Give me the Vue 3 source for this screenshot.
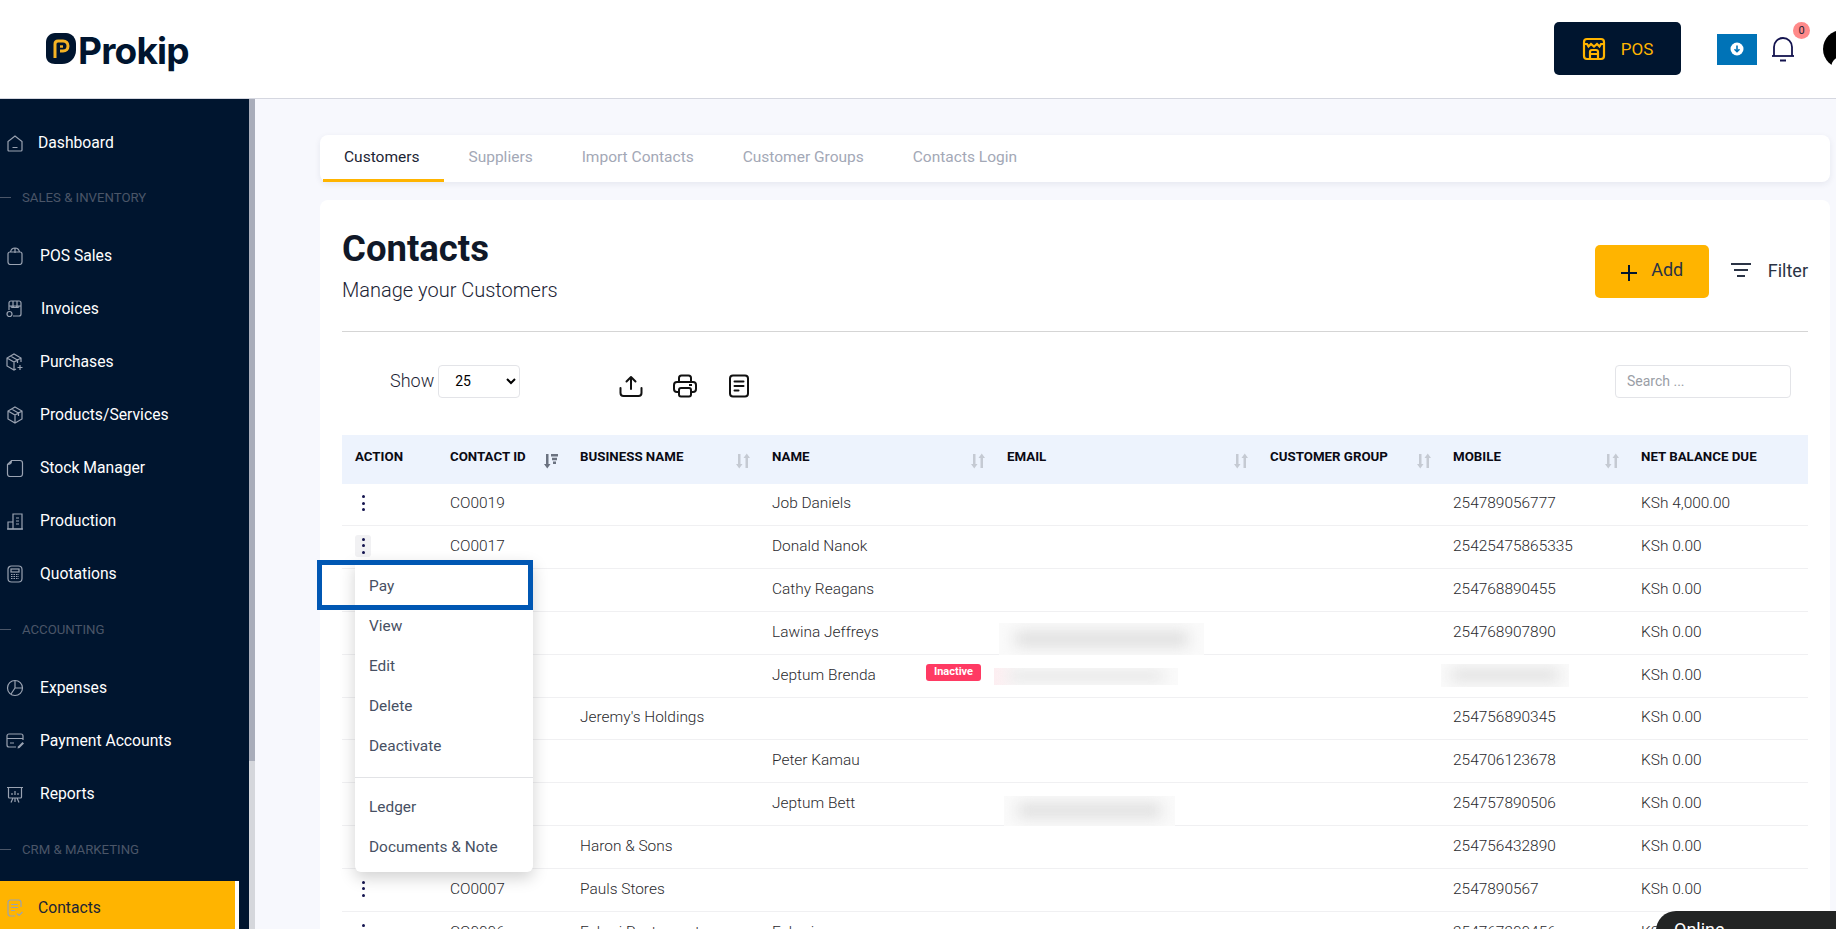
<template>
  <div class="page">
    <header class="topbar">
      <div class="logo">
        <svg class="logo-mark" viewBox="0 0 30 31" width="30" height="31">
          <path d="M9 0h11c6 0 10 5 10 11v6c0 8-6 14-14 14H9c-5 0-9-3-9-8V9c0-5 4-9 9-9z" fill="#00152f" />
          <path d="M9 25V11c0-2 1-3 3-3h5c3 0 5 2 5 5s-2 5-5 5h-3" fill="none" stroke="#f5b324" stroke-width="3" />
          <path d="M14 13.500h3" stroke="#f5b324" stroke-width="2.400" />
        </svg>
        <span class="logo-text">Prokip</span>
      </div>
      <div class="top-actions">
        <button class="pos-btn">
          <svg viewBox="0 0 24 24" width="24" height="24" fill="none" stroke="#ffb400" stroke-width="2.200">
            <rect x="2" y="2" width="20" height="20" rx="3" />
            <path d="M2 7h3l1.500 2.500L9 7l3 2.500L15 7l2.500 2.500L19 7h3" />
            <path d="M8 22v-7c0-1 1-2 2-2h4c1 0 2 1 2 2v7M8 17h8" />
          </svg>
          <span>POS</span>
        </button>
        <div class="download">
          <svg viewBox="0 0 14 14" width="14" height="14">
            <circle cx="7" cy="7" r="6.500" fill="#fff" />
            <path d="M7 3.500v6M4.500 7.200L7 9.700l2.500-2.500" fill="none" stroke="#0073b7" stroke-width="1.600" />
          </svg>
        </div>
        <div class="bell">
          <svg viewBox="0 0 24 28" width="24" height="28" fill="none" stroke="#14144f" stroke-width="1.800">
            <path d="M3 21v-9a9 9 0 0 1 18 0v9" />
            <path d="M1 21h22" />
            <path d="M9 25.500h6" stroke-width="2" />
          </svg>
          <span class="bell-count">0</span>
        </div>
        <div class="avatar">
          <svg viewBox="0 0 38 38" width="38" height="38">
            <circle cx="19" cy="19" r="19" fill="#000" />
            <circle cx="21" cy="14" r="6" fill="#fff" />
            <path d="M8 38c0-8 6-12 13-12s13 4 13 12z" fill="#fff" />
          </svg>
        </div>
      </div>
    </header>

    <div class="body">
      <aside class="sidebar">
        <nav class="nav">
          <template v-for="item in navItems" :key="item.label">
            <div v-if="item.section" class="nav-section">
              <span class="dash"></span>{{ item.label }}
            </div>
            <div v-else class="nav-item" :class="{ active: item.active }" :style="{ gap: (item.gap || 16) + 'px' }">
              <svg class="nav-icon" viewBox="0 0 18 18" width="18" height="18" fill="none" stroke-width="1.200" v-html="item.icon"></svg>
              <span>{{ item.label }}</span>
            </div>
          </template>
        </nav>
        <div class="scrollbar"><div class="thumb"></div></div>
      </aside>

      <main class="content">
        <div class="tabs">
          <div v-for="(tab, i) in tabs" :key="tab" class="tab" :class="{ on: i === 0 }">{{ tab }}</div>
        </div>

        <section class="card">
          <div class="card-head">
            <div>
              <h1>Contacts</h1>
              <p>Manage your Customers</p>
            </div>
            <div class="head-actions">
              <button class="add-btn">
                <svg viewBox="0 0 18 18" width="18" height="18" stroke="#00152f" stroke-width="2">
                  <path d="M9 1v16M1 9h16" />
                </svg>
                <span>Add</span>
              </button>
              <div class="filter">
                <svg viewBox="0 0 22 16" width="22" height="16" stroke="#2a3345" stroke-width="2">
                  <path d="M1 2h20M4 8h14M7 14h8" />
                </svg>
                Filter
              </div>
            </div>
          </div>

          <div class="toolbar">
            <div class="show">
              <label>Show</label>
              <select class="page-size">
                <option>25</option>
              </select>
            </div>
            <div class="tools">
              <svg viewBox="0 0 24 24" width="24" height="24" fill="none" stroke="#111" stroke-width="2" stroke-linecap="round" stroke-linejoin="round">
                <path d="M12 15V3M7.500 7.500L12 3l4.500 4.500" />
                <path d="M1.500 14v5c0 2 1 3 3 3h15c2 0 3-1 3-3v-5" />
              </svg>
              <svg viewBox="0 0 24 24" width="24" height="24" fill="none" stroke="#111" stroke-width="2" stroke-linejoin="round">
                <path d="M6 8V4c0-1.500 1-2.500 2.500-2.500h7C17 1.500 18 2.500 18 4v4" />
                <path d="M6 18H4c-2 0-3-1-3-3v-4c0-2 1-3 3-3h16c2 0 3 1 3 3v4c0 2-1 3-3 3h-2" />
                <rect x="6" y="14" width="12" height="8.500" rx="2" />
                <path d="M16 11h3" />
              </svg>
              <svg viewBox="0 0 24 24" width="24" height="24" fill="none" stroke="#111" stroke-width="2" stroke-linecap="round">
                <rect x="3" y="1.500" width="18" height="21" rx="3" />
                <path d="M7.500 7.500h9M7.500 12h9M7.500 16.500h4" />
              </svg>
            </div>
            <input class="search" placeholder="Search ..." />
          </div>

          <div class="table-wrap">
            <table class="contacts">
              <colgroup>
                <col v-for="w in colWidths" :key="w" :style="{ width: w + 'px' }" />
              </colgroup>
              <thead>
                <tr>
                  <th>ACTION</th>
                  <th v-for="col in sortCols" :key="col.name">
                    <div class="th-in">
                      <span>{{ col.name }}</span>
                      <svg viewBox="0 0 14 16" width="14" height="16" :class="col.active ? 'sort-on' : 'sort-off'">
                        <template v-if="col.active">
                          <path d="M2 1h2.500v10h2L3.250 15.500 0 11h2z" />
                          <path d="M7 1h7v2.400H7zM8 4.800h5v2.400H8zM9 8.600h3V11H9z" />
                        </template>
                        <template v-else>
                          <path d="M2 1h2.500v10h2L3.250 15.500 0 11h2z" />
                          <path d="M9.500 15h2.500V5h2L10.750 .5 7.500 5h2z" />
                        </template>
                      </svg>
                    </div>
                  </th>
                  <th>NET BALANCE DUE</th>
                </tr>
              </thead>
              <tbody>
                <tr v-for="(row, i) in rows" :key="i" :class="{ first: i === 0, short: i === 5 }">
                  <td>
                    <span v-if="row.id" class="dots" :class="{ open: row.open }">
                      <i></i><i></i><i></i>
                    </span>
                  </td>
                  <td>{{ row.id }}</td>
                  <td>{{ row.business }}</td>
                  <td>
                    <div class="name-cell">
                      <span>{{ row.name }}</span>
                      <span v-if="row.inactive" class="badge">Inactive</span>
                    </div>
                  </td>
                  <td class="cell-pos">
                    <span v-if="row.mail" class="redact" :class="{ pink: row.inactive }" :style="patch(row.mail)"><i></i></span>
                  </td>
                  <td></td>
                  <td class="cell-pos">
                    {{ row.mobile }}
                    <span v-if="row.phone" class="redact" :style="patch(row.phone)"><i></i></span>
                  </td>
                  <td>{{ row.balance }}</td>
                </tr>
              </tbody>
            </table>

            <div class="action-menu">
              <div v-for="a in menuTop" :key="a" class="menu-item">{{ a }}</div>
              <div class="menu-line"></div>
              <div v-for="a in menuBottom" :key="a" class="menu-item">{{ a }}</div>
            </div>
            <div class="highlight"></div>
          </div>
        </section>
      </main>
    </div>

    <div class="online">Online</div>
  </div>
</template>

<script setup>
const s = 'stroke="#9aa3b2"'

const navItems = [
  { label: 'Dashboard', gap: 14, icon: `<path ${s} d="M2 16V7.500L9 2l7 5.500V16c0 .6-.4 1-1 1H3c-.6 0-1-.4-1-1zM6.500 13.500h5"/>` },
  { label: 'SALES & INVENTORY', section: true },
  { label: 'POS Sales', icon: `<path ${s} d="M2 7c0-1 .8-2 2-2h10c1.200 0 2 1 2 2v8c0 1.500-1 2.500-2.500 2.500h-9C3 17.500 2 16.500 2 15zM4.500 5C5 2.500 7 1 9 1s4 1.500 4.500 4M9 1v5"/>` },
  { label: 'Invoices', gap: 17, icon: `<path ${s} d="M3 10V3c0-1 .8-2 2-2h8c1.200 0 2 1 2 2v11c0 1.200-.8 2-2 2H7M3 6h12M7 1v5M11 1v5M5 6c0 2 2 2 2 0 0 2 4 2 4 0 0 2 2 2 2 0"/><circle ${s} cx="3.500" cy="14" r="2.500"/>` },
  { label: 'Purchases', icon: `<path ${s} d="M15 9V5L8 1 1 5v8l7 4 2-1M1 5l7 4 7-4M8 9v8M4.500 3l7 4v3M14 12v5M11.500 14.500h5"/>` },
  { label: 'Products/Services', icon: `<path ${s} d="M9 1l7 4v8l-7 4-7-4V5zM2 5l7 4 7-4M9 9v8M5.500 3l7 4v3"/>` },
  { label: 'Stock Manager', icon: `<path ${s} d="M1.500 5.500L5.500 1.500H14c1.500 0 2.500 1 2.500 2.500v11c0 1.500-1 2.500-2.500 2.500H4c-1.500 0-2.500-1-2.500-2.500zM5.500 1.500c0 3-1.500 4-4 4"/>` },
  { label: 'Production', icon: `<path ${s} d="M2 17V10h5V2h9v15zM7 10v7M10 6h3M10 9h3M10 12h3"/><path ${s} d="M1 17h16"/>` },
  { label: 'Quotations', icon: `<rect ${s} x="2" y="1" width="14" height="16" rx="3.500"/><rect ${s} x="5" y="4" width="8" height="3"/><path ${s} stroke-dasharray="1.500 1" d="M5 9.500h8M5 11.500h8M5 13.500h8"/>` },
  { label: 'ACCOUNTING', section: true },
  { label: 'Expenses', icon: `<circle ${s} cx="9" cy="9" r="7.500"/><path ${s} d="M9 1.500V9h7.500M9 9l-4 6"/>` },
  { label: 'Payment Accounts', icon: `<path ${s} d="M17 8V4c0-1.200-.8-2-2-2H3c-1.200 0-2 .8-2 2v9c0 1.200.8 2 2 2h7M1 6.500h16M4 11h4"/><path fill="#9aa3b2" d="M16.500 10l1.500 1.500-4.500 4.500-2 .5.500-2z"/>` },
  { label: 'Reports', icon: `<path ${s} d="M2.500 3v9c0 .6.400 1 1 1h11c.6 0 1-.4 1-1V3M1 2.500h16M9 13v4M5 17.500l2-4.500M13 17.500L11 13M6 10V8M9 10V6M12 10V8"/>` },
  { label: 'CRM & MARKETING', section: true },
  { label: 'Contacts', active: true, gap: 14, icon: `<path ${s} d="M15 8V3.500C15 2 14 1 12.500 1h-8C3 1 2 2 2 3.500v11C2 16 3 17 4.500 17H9M5 5.500h7M5 8.500h7M5 11.500h4M11 14.500l2 2 3.500-3.500"/>` }
]

const tabs = ['Customers', 'Suppliers', 'Import Contacts', 'Customer Groups', 'Contacts Login']

const colWidths = [95, 130, 192, 235, 263, 183, 188, 180]

const sortCols = [
  { name: 'CONTACT ID', active: true },
  { name: 'BUSINESS NAME' },
  { name: 'NAME' },
  { name: 'EMAIL' },
  { name: 'CUSTOMER GROUP' },
  { name: 'MOBILE' }
]

// rows behind the open menu show no id, same as the screenshot
const rows = [
  { id: 'CO0019', name: 'Job Daniels', mobile: '254789056777', balance: 'KSh 4,000.00' },
  { id: 'CO0017', name: 'Donald Nanok', mobile: '25425475865335', balance: 'KSh 0.00', open: true },
  { name: 'Cathy Reagans', mobile: '254768890455', balance: 'KSh 0.00' },
  { name: 'Lawina Jeffreys', mobile: '254768907890', balance: 'KSh 0.00', mail: [5, 11, 205, 32] },
  { name: 'Jeptum Brenda', inactive: true, balance: 'KSh 0.00', mail: [0, 13, 184, 17], phone: [1, 9, 128, 23] },
  { business: "Jeremy's Holdings", mobile: '254756890345', balance: 'KSh 0.00' },
  { name: 'Peter Kamau', mobile: '254706123678', balance: 'KSh 0.00' },
  { name: 'Jeptum Bett', mobile: '254757890506', balance: 'KSh 0.00', mail: [10, 13, 171, 30] },
  { business: 'Haron & Sons', mobile: '254756432890', balance: 'KSh 0.00' },
  { id: 'CO0007', business: 'Pauls Stores', mobile: '2547890567', balance: 'KSh 0.00' },
  { id: 'CO0006', business: 'Fahari Restaurant', name: 'Fahari', mobile: '254767200456', balance: 'KSh 0.00' }
]

const menuTop = ['Pay', 'View', 'Edit', 'Delete', 'Deactivate']
const menuBottom = ['Ledger', 'Documents & Note']

const patch = ([left, top, width, height]) => ({
  left: left + 'px',
  top: top + 'px',
  width: width + 'px',
  height: height + 'px'
})
</script>

<style scoped>
.page {
  position: relative;
  height: 929px;
  overflow: hidden;
  background: #f7f8fd;
  font-family: Roboto, "Liberation Sans", sans-serif;
  color: #1c2434;
}
.topbar {
  height: 98px;
  background: #fff;
  border-bottom: 1px solid #d5d7e0;
  display: flex;
  align-items: center;
  justify-content: space-between;
  padding-left: 46px;
}
.logo {
  display: flex;
  align-items: center;
  gap: 2px;
  margin-top: 2px;
}
.logo-mark {
  margin-bottom: 3px;
}
.logo-text {
  font-family: Inter, Roboto, sans-serif;
  font-size: 37px;
  font-weight: 700;
  letter-spacing: -0.8px;
  color: #00152f;
}
.top-actions {
  display: flex;
  align-items: center;
  margin-right: -25px;
}
.pos-btn {
  width: 127px;
  height: 53px;
  background: #00152f;
  border: none;
  border-radius: 5px;
  display: flex;
  align-items: center;
  justify-content: center;
  gap: 15px;
  color: #ffb400;
  font-family: inherit;
  font-size: 17px;
  margin-right: 36px;
  margin-top: -1px;
}
.download {
  width: 40px;
  height: 31px;
  background: #0073b7;
  display: flex;
  align-items: center;
  justify-content: center;
  margin-right: 14px;
}
.bell {
  position: relative;
  width: 24px;
  height: 28px;
  margin-right: 28px;
}
.bell-count {
  position: absolute;
  top: -13px;
  left: 22px;
  width: 17px;
  height: 17px;
  border-radius: 50%;
  background: #ff8a8a;
  font-size: 11px;
  line-height: 17px;
  text-align: center;
}
.avatar {
  width: 38px;
  height: 38px;
}
.body {
  display: flex;
  height: 830px;
}
.sidebar {
  width: 255px;
  flex: none;
  display: flex;
  background: #00152f;
}
.nav {
  width: 249px;
  padding-top: 16px;
}
.nav-item {
  height: 53px;
  box-sizing: border-box;
  display: flex;
  align-items: center;
  padding-left: 6px;
  color: #fff;
  font-size: 15.700px;
}
.nav-item:first-child {
  padding-top: 2px;
}
.nav-item.active {
  width: 239px;
  background: #ffb400;
  border-right: 4px solid #fff;
  color: #1c2434;
}
.nav-icon {
  flex: none;
}
.nav-section {
  height: 61px;
  padding-bottom: 3px;
  box-sizing: border-box;
  display: flex;
  align-items: center;
  gap: 11px;
  color: #4b5668;
  font-size: 13.200px;
}
.dash {
  width: 11px;
  height: 1px;
  background: #4b5668;
}
.scrollbar {
  width: 6px;
  background: #d5d7dc;
}
.thumb {
  height: 662px;
  background: #a9adba;
}
.content {
  flex: 1;
  min-width: 0;
  padding: 36px 6px 0 65px;
}
.tabs {
  height: 47px;
  background: #fff;
  border-radius: 8px;
  box-shadow: 0 2px 6px rgba(30, 40, 80, 0.08);
  display: flex;
  padding-left: 3px;
  box-sizing: border-box;
}
.tab {
  padding: 0 21px;
  height: 47px;
  line-height: 44px;
  box-sizing: border-box;
  font-size: 15.500px;
  color: #a3a8b6;
  margin-right: 7px;
}
.tab.on {
  color: #1c2434;
  border-bottom: 3px solid #ffb400;
  padding: 0 25px 0 21px;
  margin-right: 3px;
}
.card {
  margin-top: 18px;
  background: #fff;
  border-radius: 8px 8px 0 0;
  padding: 0 22px;
  height: 800px;
}
.card-head {
  height: 132px;
  border-bottom: 1px solid #d5d5d5;
  display: flex;
  justify-content: space-between;
  box-sizing: border-box;
  padding-top: 28px;
}
h1 {
  margin: 0;
  font-size: 36.500px;
  line-height: 42px;
  font-weight: 700;
  color: #101828;
}
.card-head p {
  margin: 8px 0 0;
  font-size: 20px;
  font-weight: 300;
  color: #1c2434;
}
.head-actions {
  display: flex;
  align-items: flex-start;
  gap: 21px;
  padding-top: 17px;
}
.add-btn {
  width: 114px;
  height: 53px;
  background: #ffb400;
  border: none;
  border-radius: 5px;
  display: flex;
  align-items: center;
  justify-content: center;
  gap: 13px;
  font-family: inherit;
  font-size: 18px;
  color: #2a3345;
}
.add-btn span {
  margin-bottom: 4px;
}
.add-btn svg {
  margin-top: 2px;
}
.filter {
  display: flex;
  align-items: center;
  gap: 16px;
  font-size: 18px;
  color: #2a3345;
  height: 50px;
}
.toolbar {
  height: 103px;
  display: flex;
  align-items: center;
}
.show {
  display: flex;
  align-items: center;
  gap: 4px;
  margin-left: 48px;
  font-size: 18px;
  font-weight: 300;
  margin-top: -5px;
}
.show label {
  margin-top: -2px;
}
.page-size {
  width: 82px;
  height: 33px;
  background: #fff;
  border: 1px solid #e3e4e8;
  border-radius: 4px;
  padding-left: 12px;
  font-family: inherit;
  font-size: 14px;
}
.tools {
  display: flex;
  gap: 30px;
  margin-left: 99px;
  margin-top: 5px;
}
.search {
  margin-left: auto;
  margin-right: 17px;
  width: 176px;
  height: 33px;
  border: 1px solid #e3e4e8;
  border-radius: 4px;
  padding: 0 11px;
  box-sizing: border-box;
  font-family: inherit;
  font-size: 14px;
  margin-top: -5px;
}
.search::placeholder {
  color: #9a9ea6;
}
.table-wrap {
  position: relative;
}
.contacts {
  width: 1466px;
  table-layout: fixed;
  border-collapse: collapse;
}
thead tr {
  height: 49px;
  background: #edf3fd;
}
th {
  text-align: left;
  padding: 0 0 6px 13px;
  font-size: 13.300px;
  font-weight: 700;
  color: #0a0a14;
  white-space: nowrap;
}
.th-in {
  display: flex;
  align-items: center;
  justify-content: space-between;
  padding-right: 9px;
}
.th-in svg {
  margin-top: 8px;
}
.sort-off {
  fill: #c5cad3;
}
.sort-on {
  fill: #6b7280;
}
tbody tr {
  height: 43px;
  border-bottom: 1px solid #f0f0f2;
}
tbody tr.first {
  height: 41px;
}
tbody tr.short {
  height: 42px;
}
td {
  padding: 0 0 2px 13px;
  font-size: 15.450px;
  font-weight: 300;
  color: #2a2a2e;
  white-space: nowrap;
}
.cell-pos {
  position: relative;
}
.name-cell {
  display: flex;
  justify-content: space-between;
  align-items: flex-start;
  padding-right: 13px;
}
.badge {
  height: 17px;
  width: 55px;
  margin-top: -2px;
  background: #ff3a63;
  color: #fff;
  border-radius: 3px;
  font-size: 11px;
  font-weight: 700;
  line-height: 15px;
  text-align: center;
}
.redact {
  position: absolute;
  display: block;
  overflow: hidden;
  background: #fafafa;
}
.redact.pink {
  background: linear-gradient(90deg, #fdeef1, #fafafa 14%);
}
.redact i {
  position: absolute;
  inset: 25% 8%;
  background: #e0e0e0;
  filter: blur(7px);
}
.dots {
  display: inline-flex;
  flex-direction: column;
  align-items: center;
  justify-content: center;
  gap: 3.500px;
  width: 16px;
  height: 22px;
  border-radius: 3px;
  vertical-align: middle;
}
.dots.open {
  background: #f1f1f3;
}
.dots i {
  width: 3px;
  height: 3px;
  border-radius: 50%;
  background: #14144f;
}
.action-menu {
  position: absolute;
  top: 125px;
  left: 13px;
  width: 178px;
  height: 312px;
  background: #fff;
  border-radius: 0 0 6px 6px;
  box-shadow: 0 6px 16px rgba(0, 0, 0, 0.18);
  padding-top: 6px;
  box-sizing: border-box;
}
.menu-item {
  height: 40px;
  line-height: 40px;
  padding-left: 14px;
  font-size: 15.400px;
  color: #475063;
}
.menu-line {
  height: 1px;
  background: #e2e3e6;
  margin: 11px 0 9px;
}
.highlight {
  position: absolute;
  top: 125px;
  left: -25px;
  width: 216px;
  height: 50px;
  border: 5px solid #0057b3;
  box-sizing: border-box;
}
.online {
  position: absolute;
  left: 1656px;
  top: 911px;
  width: 180px;
  height: 40px;
  background: #222424;
  color: #fff;
  border-radius: 20px 0 0 0;
  padding: 8px 0 0 18px;
  box-sizing: border-box;
  font-size: 18px;
}
</style>
